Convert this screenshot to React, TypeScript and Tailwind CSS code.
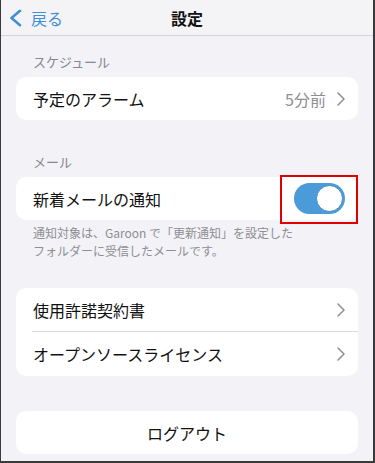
import { ChevronRight } from 'lucide-react';

const font = { fontFamily: '"Noto Sans CJK JP", "Noto Sans", sans-serif' };

function SectionLabel({ children, className }: { children: string; className: string }) {
  return (
    <div className={`px-[32px] text-[13px] leading-[18px] text-[#86868b] ${className}`}>
      {children}
    </div>
  );
}

function Row({ label, value, divider, tall }: { label: string; value?: string; divider?: boolean; tall?: boolean }) {
  return (
    <div className={`relative flex items-center pl-[17px] pr-[5px] ${tall ? 'h-[44px]' : 'h-[43px]'}`}>
      <span className="flex-1 text-[16px] text-[#111]">{label}</span>
      {value && <span className="mr-[3px] text-[16px] text-[#8e8e93]">{value}</span>}
      <ChevronRight className="h-[24px] w-[24px] text-[#8e8e93]" strokeWidth={1.5} />
      {divider && <div className="absolute bottom-0 left-[16px] right-0 h-px bg-[#dcdce0]" />}
    </div>
  );
}

function Toggle() {
  return (
    <div className="relative">
      <div className="flex h-[31px] w-[51px] items-center justify-end rounded-full bg-[#4a9bd8] px-[2px]">
        <div className="h-[27px] w-[27px] rounded-full border border-[#3d8bcc] bg-white" />
      </div>
      {/* annotation */}
      <div className="absolute -left-[14px] -top-[8px] h-[49px] w-[78px] border-2 border-[#e00000]" />
    </div>
  );
}

export default function App() {
  return (
    <div
      style={font}
      className="flex h-[463px] w-[375px] flex-col overflow-hidden border-b-2 border-l border-r-2 border-[#3a3a3a] bg-[#f2f2f7]"
    >
      {/* Header */}
      <div className="grid h-[36px] shrink-0 grid-cols-3 items-center border-b border-[#d3d3d8] bg-[#f4f4f7]">
        <div className="flex items-center pl-[8px] text-[#3f8fd6]">
          <svg width="13" height="18" viewBox="0 0 13 18" fill="none" stroke="currentColor" strokeWidth="2.6" strokeLinecap="round" strokeLinejoin="round">
            <polyline points="11,1.8 2.5,9 11,16.2" />
          </svg>
          <span className="ml-[9px] text-[16px]">戻る</span>
        </div>
        <div className="text-center text-[16px] font-bold text-[#111]">設定</div>
        <div />
      </div>

      <SectionLabel className="mt-[17px]">スケジュール</SectionLabel>
      <div className="mx-[15px] mt-[6px] rounded-[10px] bg-white">
        <Row label="予定のアラーム" value="5分前" />
      </div>

      <SectionLabel className="mt-[33px]">メール</SectionLabel>
      <div className="mx-[15px] mt-[6px] flex h-[43px] items-center rounded-[10px] bg-white pl-[17px] pr-[13px]">
        <span className="flex-1 text-[16px] text-[#111]">新着メールの通知</span>
        <Toggle />
      </div>
      <div className="mt-[4px] px-[32px] text-[12px] leading-[18px] text-[#8e8e93]">
        通知対象は、Garoon で「更新通知」を設定した
        <br />
        フォルダーに受信したメールです。
      </div>

      <div className="mx-[15px] mt-[28px] rounded-[10px] bg-white">
        <Row label="使用許諾契約書" divider tall />
        <Row label="オープンソースライセンス" tall />
      </div>

      <div className="mx-[15px] mt-[35px] flex h-[43px] items-center justify-center rounded-[10px] bg-white text-[16px] text-[#111]">
        ログアウト
      </div>
    </div>
  );
}
